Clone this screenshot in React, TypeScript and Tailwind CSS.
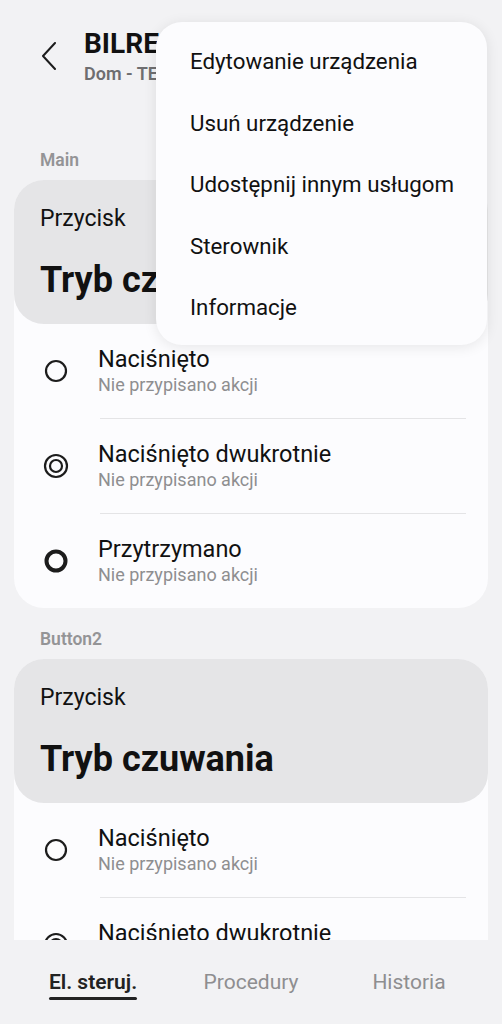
import React from "react";

type Trigger = { title: string; icon: "single" | "double" | "hold" };

const triggers: Trigger[] = [
  { title: "Naciśnięto", icon: "single" },
  { title: "Naciśnięto dwukrotnie", icon: "double" },
  { title: "Przytrzymano", icon: "hold" },
];

const menuItems = [
  "Edytowanie urządzenia",
  "Usuń urządzenie",
  "Udostępnij innym usługom",
  "Sterownik",
  "Informacje",
];

function TriggerIcon({ kind }: { kind: Trigger["icon"] }) {
  return (
    <svg width="28" height="28" viewBox="0 0 28 28" fill="none" stroke="#1c1c1c">
      {kind === "single" && <circle cx="14" cy="14" r="10" strokeWidth="2.2" />}
      {kind === "double" && (
        <>
          <circle cx="14" cy="14" r="11" strokeWidth="2.2" />
          <circle cx="14" cy="14" r="6" strokeWidth="2.2" />
        </>
      )}
      {kind === "hold" && <circle cx="14" cy="14" r="9.5" strokeWidth="4" />}
    </svg>
  );
}

function ButtonCard({ label }: { label: string }) {
  return (
    <div>
      <div className="h-[51px] flex items-end pb-[8px] pl-[40px]">
        <span className="text-[17.5px] leading-[24px] font-semibold text-[#949496]">{label}</span>
      </div>
      <div className="mx-[14px] rounded-[30px] bg-[#fcfcfe]">
        <div className="h-[144px] rounded-[30px] bg-[#e5e5e7] pl-[26px] pt-[25px]">
          <div className="text-[23px] leading-[28px] text-[#111]">Przycisk</div>
          <div className="mt-[25px] text-[36px] leading-[44px] font-bold text-[#111]">
            Tryb czuwania
          </div>
        </div>
        <div>
          {triggers.map((t, i) => (
            <div key={t.title}>
              {i > 0 && <div className="h-px bg-[#e4e4e6] ml-[86px] mr-[22px]" />}
              <div className="h-[94px] flex items-center">
                <div className="ml-[28px] w-[28px] flex justify-center">
                  <TriggerIcon kind={t.icon} />
                </div>
                <div className="ml-[28px] flex flex-col">
                  <span className="text-[23.5px] leading-[28px] text-[#111]">{t.title}</span>
                  <span className="text-[18px] leading-[24px] text-[#8e8e90]">
                    Nie przypisano akcji
                  </span>
                </div>
              </div>
            </div>
          ))}
        </div>
      </div>
    </div>
  );
}

export default function App() {
  return (
    <div
      className="relative w-full h-[1024px] overflow-hidden bg-[#f2f2f4] flex flex-col"
      style={{ fontFamily: "Roboto, 'Noto Sans', sans-serif" }}
    >
      <div className="h-[940px] overflow-hidden">
        {/* header */}
        <div className="h-[129px] flex pt-[28px]">
          <div className="w-[84px] flex justify-center pt-[14px] pl-[14px]">
            <svg width="18" height="28" viewBox="0 0 18 28" fill="none">
              <path d="M15 1 L3 14 L15 27" stroke="#1c1c1c" strokeWidth="2" strokeLinecap="round" strokeLinejoin="round" />
            </svg>
          </div>
          <div className="flex flex-col">
            <span className="text-[28px] leading-[32px] font-bold text-[#111]">BILRESA przycisk</span>
            <span className="text-[18px] leading-[24px] font-semibold text-[#6e6e70] mt-[2px]">Dom - TEST</span>
          </div>
        </div>

        <ButtonCard label="Main" />
        <ButtonCard label="Button2" />
      </div>

      {/* bottom tabs */}
      <div className="h-[84px] grid grid-cols-3 px-[14px] pt-[28px]">
        <div className="flex justify-center">
          <div className="inline-flex flex-col items-stretch">
            <span className="text-[21px] leading-[28px] font-semibold text-[#222]">El. steruj.</span>
            <span className="h-[3px] mt-[1px] rounded-full bg-[#222]" />
          </div>
        </div>
        <div className="flex justify-center">
          <span className="text-[21px] leading-[28px] text-[#8e8e90]">Procedury</span>
        </div>
        <div className="flex justify-center">
          <span className="text-[21px] leading-[28px] text-[#8e8e90]">Historia</span>
        </div>
      </div>

      {/* overflow menu */}
      <div className="absolute left-[156px] top-[22px] w-[331px] rounded-[26px] bg-[#fcfcfe] pt-[9px] pb-[6px] shadow-[0_2px_14px_rgba(0,0,0,0.09)]">
        {menuItems.map((item) => (
          <div key={item} className="h-[61.5px] flex items-center pl-[34px]">
            <span className="text-[22.3px] text-[#111]">{item}</span>
          </div>
        ))}
      </div>
    </div>
  );
}
